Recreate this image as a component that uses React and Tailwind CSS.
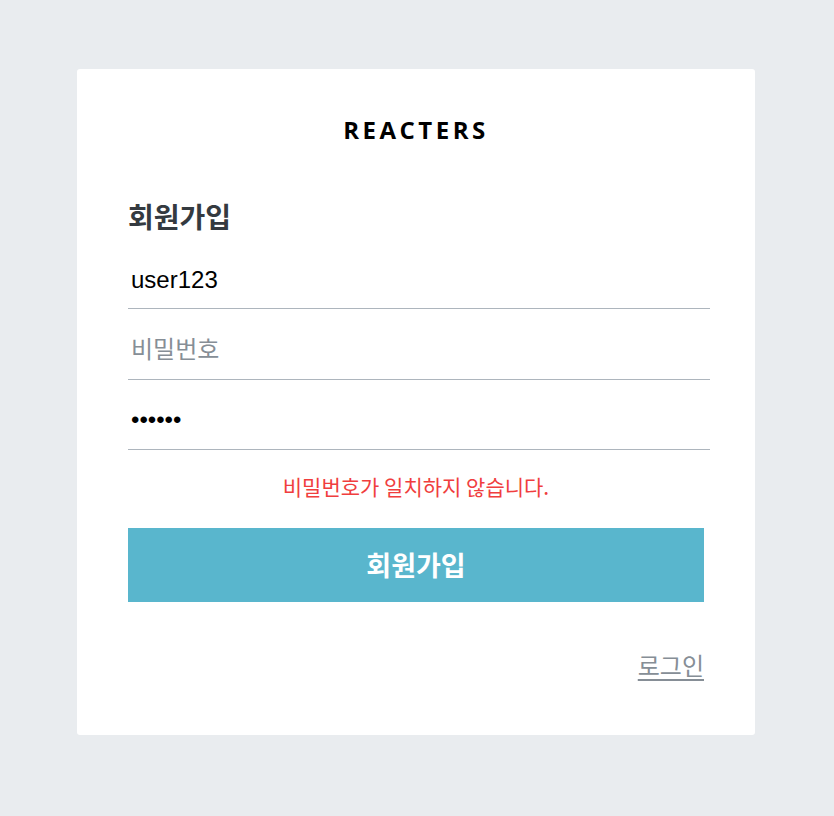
export default function App() {
  return (
    <div className="min-h-screen w-full bg-[#e9ecef] flex justify-center pt-[69px] pr-[2px] font-['Liberation_Sans','Noto_Sans_CJK_KR',sans-serif]">
      <div className="w-[678px] h-[666px] bg-white rounded-[3px] px-[51px] pt-[45px]">
        {/* Logo */}
        <div className="text-center font-['Open_Sans',sans-serif] font-bold text-[24px] leading-[32px] tracking-[3.5px] text-black">
          REACTERS
        </div>

        <h3 className="mt-[50px] font-['Noto_Sans_CJK_KR',sans-serif] font-bold text-[28px] leading-[40px] text-[#343a40]">
          회원가입
        </h3>

        <form className="mt-[3px]">
          <input
            className="block w-[calc(100%+6px)] h-[70px] border-b border-[#adb5bd] px-[3px] pt-[13px] text-[24px] text-black outline-none font-['Liberation_Sans','Noto_Sans_CJK_KR',sans-serif]"
            defaultValue="user123"
          />
          <input
            className="block w-[calc(100%+6px)] h-[71px] border-b border-[#adb5bd] px-[3px] pt-[11px] text-[24px] text-black outline-none placeholder:text-[#868e96] font-['Liberation_Sans','Noto_Sans_CJK_KR',sans-serif]"
            placeholder="비밀번호"
            type="password"
          />
          <input
            className="block w-[calc(100%+6px)] h-[70px] border-b border-[#adb5bd] px-[3px] pt-[11px] text-[24px] text-black outline-none font-['Liberation_Sans',sans-serif]"
            defaultValue="123456"
            type="password"
          />
          <div className="mt-[21px] text-center text-[21px] leading-[30px] text-[#f03e3e] font-['Noto_Sans_CJK_KR',sans-serif]">
            비밀번호가 일치하지 않습니다.
          </div>
          <button
            type="button"
            className="mt-[27px] w-full h-[74px] bg-[#59b6cd] text-white font-bold text-[27px] font-['Noto_Sans_CJK_KR',sans-serif]"
          >
            회원가입
          </button>
        </form>

        <div className="mt-[47px] flex justify-end">
          <a
            href="#"
            className="text-[24px] leading-[32px] text-[#868e96] underline underline-offset-[4px] font-['Noto_Sans_CJK_KR',sans-serif]"
          >
            로그인
          </a>
        </div>
      </div>
    </div>
  );
}
